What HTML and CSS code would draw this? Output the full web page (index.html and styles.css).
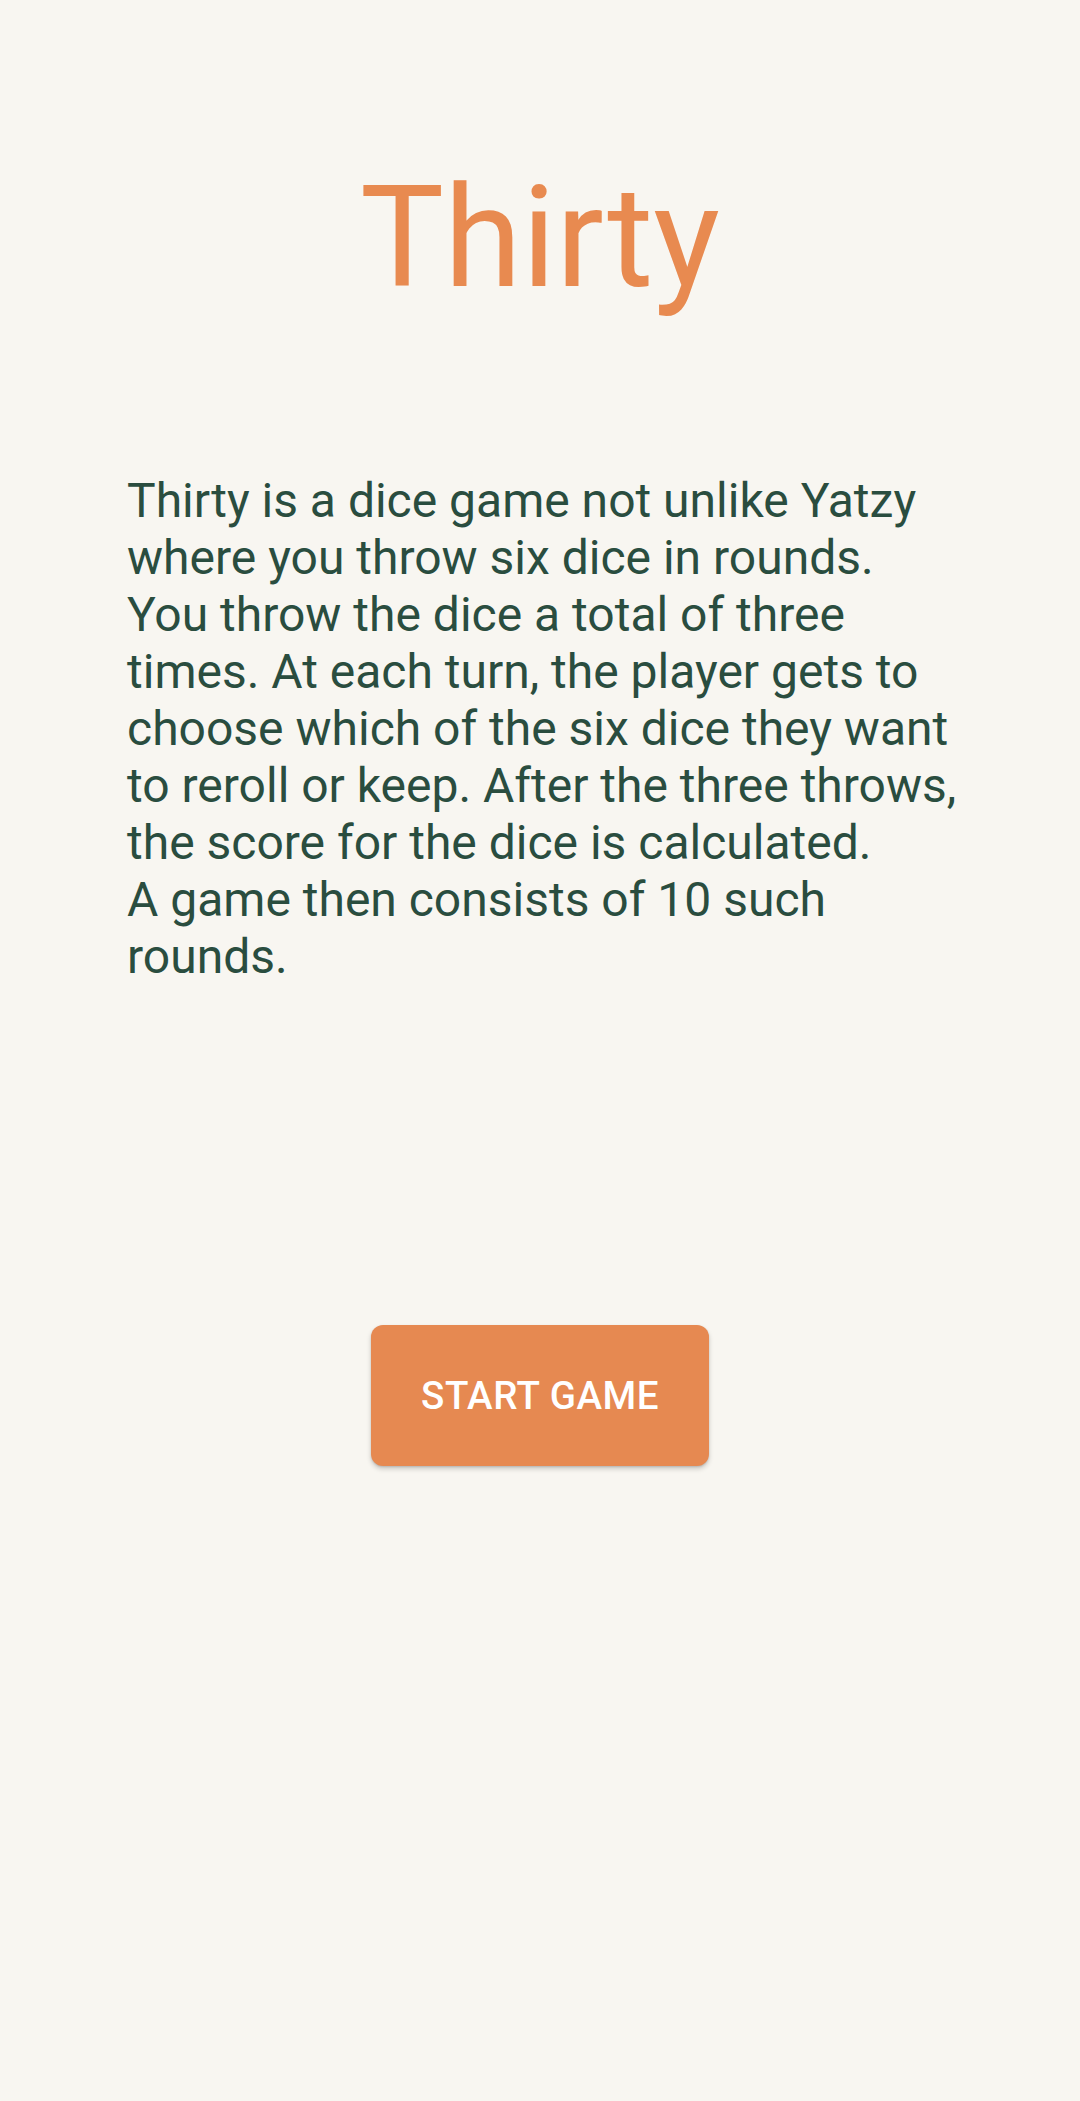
FILE: index.html
```html
<!DOCTYPE html>
<html lang="en">
<head>
<meta charset="utf-8">
<title>Thirty</title>
<link rel="stylesheet" href="styles.css">
</head>
<body>
<main class="screen">
  <h1 class="title">Thirty</h1>
  <p class="intro"><span class="line">Thirty is a dice game not unlike Yatzy</span><span class="line">where you throw six dice in rounds.</span><span class="line">You throw the dice a total of three</span><span class="line">times. At each turn, the player gets to</span><span class="line">choose which of the six dice they want</span><span class="line">to reroll or keep. After the three throws,</span><span class="line">the score for the dice is calculated.</span><span class="line">A game then consists of 10 such</span><span class="line">rounds.</span></p>
  <button class="start" type="button">START GAME</button>
</main>
</body>
</html>
```
FILE: styles.css
```css
html, body {
  margin: 0;
  padding: 0;
  background: #f8f6f1;
}
.screen {
  width: 1080px;
  height: 2101px;
  display: flex;
  flex-direction: column;
  align-items: center;
  padding-top: 167px;
  box-sizing: border-box;
  font-family: Roboto, "Noto Sans", sans-serif;
}
.title {
  margin: 0;
  font-size: 141px;
  line-height: 141px;
  font-weight: 400;
  color: #e88a50;
}
.intro {
  margin: 164px 0 0 0;
  align-self: flex-start;
  padding-left: 127px;
  font-size: 48px;
  line-height: 57px;
  color: #2a4d3f;
}
.line {
  display: block;
  white-space: nowrap;
}
.start {
  margin-top: 340px;
  width: 338px;
  height: 141px;
  border: none;
  border-radius: 12px;
  background: #e68951;
  color: #ffffff;
  font-family: Roboto, "Noto Sans", sans-serif;
  font-size: 38.5px;
  font-weight: 500;
  letter-spacing: 0.5px;
  box-shadow: 0 3px 5px rgba(0,0,0,0.18), 0 1px 2px rgba(0,0,0,0.12);
  padding: 0;
}
```
